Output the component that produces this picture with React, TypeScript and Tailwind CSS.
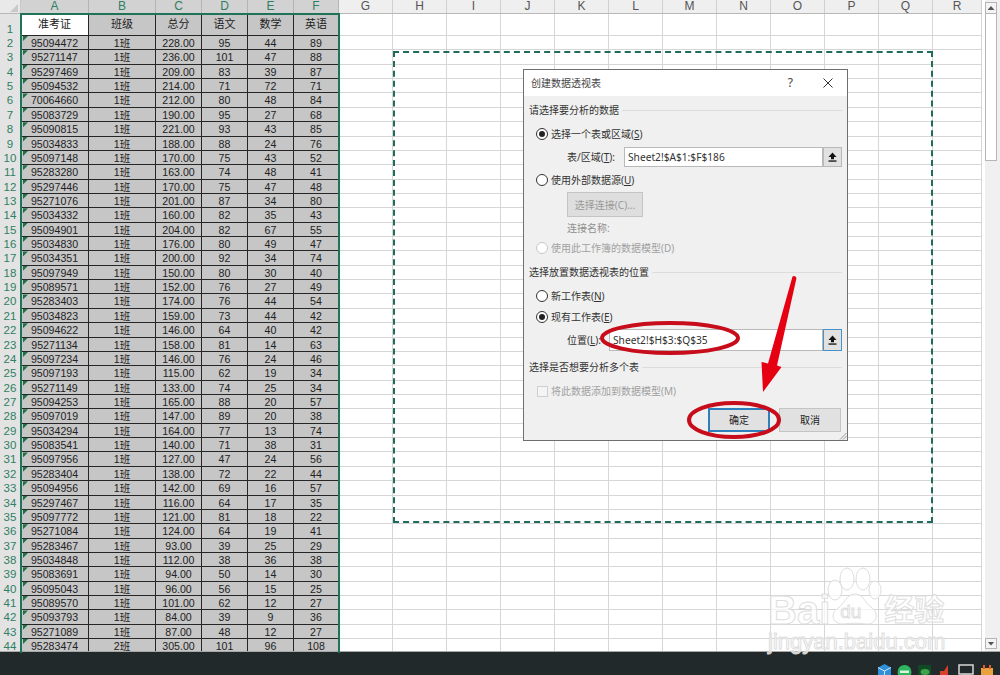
import type { ReactNode } from "react"

const rows: [string, number, number, number, number][] = [
  ["95094472", 228, 95, 44, 89],
  ["95271147", 236, 101, 47, 88],
  ["95297469", 209, 83, 39, 87],
  ["95094532", 214, 71, 72, 71],
  ["70064660", 212, 80, 48, 84],
  ["95083729", 190, 95, 27, 68],
  ["95090815", 221, 93, 43, 85],
  ["95034833", 188, 88, 24, 76],
  ["95097148", 170, 75, 43, 52],
  ["95283280", 163, 74, 48, 41],
  ["95297446", 170, 75, 47, 48],
  ["95271076", 201, 87, 34, 80],
  ["95034332", 160, 82, 35, 43],
  ["95094901", 204, 82, 67, 55],
  ["95034830", 176, 80, 49, 47],
  ["95034351", 200, 92, 34, 74],
  ["95097949", 150, 80, 30, 40],
  ["95089571", 152, 76, 27, 49],
  ["95283403", 174, 76, 44, 54],
  ["95034823", 159, 73, 44, 42],
  ["95094622", 146, 64, 40, 42],
  ["95271134", 158, 81, 14, 63],
  ["95097234", 146, 76, 24, 46],
  ["95097193", 115, 62, 19, 34],
  ["95271149", 133, 74, 25, 34],
  ["95094253", 165, 88, 20, 57],
  ["95097019", 147, 89, 20, 38],
  ["95034294", 164, 77, 13, 74],
  ["95083541", 140, 71, 38, 31],
  ["95097956", 127, 47, 24, 56],
  ["95283404", 138, 72, 22, 44],
  ["95094956", 142, 69, 16, 57],
  ["95297467", 116, 64, 17, 35],
  ["95097772", 121, 81, 18, 22],
  ["95271084", 124, 64, 19, 41],
  ["95283467", 93, 39, 25, 29],
  ["95034848", 112, 38, 36, 38],
  ["95083691", 94, 50, 14, 30],
  ["95095043", 96, 56, 15, 25],
  ["95089570", 101, 62, 12, 27],
  ["95093793", 84, 39, 9, 36],
  ["95271089", 87, 48, 12, 27],
  ["95283474", 305, 101, 96, 108],
]

// widths of the columns A..F, then G..R
const dataCols = ["w-[68px]", "w-[67px]", "w-[46px]", "w-[46px]", "w-[46px]", "w-[45px]"]
const emptyCols = [
  "w-[54px]", "w-[54px]", "w-[54px]", "w-[54px]", "w-[54px]", "w-[54px]",
  "w-[54px]", "w-[54px]", "w-[54px]", "w-[54px]", "w-[54px]", "w-[49px]",
]
const dataLetters = ["A", "B", "C", "D", "E", "F"]
const emptyLetters = ["G", "H", "I", "J", "K", "L", "M", "N", "O", "P", "Q", "R"]
const titles = ["准考证", "班级", "总分", "语文", "数学", "英语"]

function EmptyCells() {
  return (
    <>
      {emptyCols.map((w, i) => (
        <div key={i} className={`${w} flex-none border-r border-b border-[#d6d6d6] bg-white`} />
      ))}
    </>
  )
}

function RowNum({ n, tall }: { n: number; tall?: boolean }) {
  return (
    <div
      className={`w-[21px] flex-none border-r border-[#b8b8b8] bg-[#e3e3e3] text-center text-[11.5px] text-[#2f7f62] ${
        tall ? "pt-[8px] leading-[14px]" : "leading-[14px]"
      }`}
    >
      {n}
    </div>
  )
}

function DataCell({ w, children, mark }: { w: string; children: ReactNode; mark?: boolean }) {
  return (
    <div
      className={`${w} relative flex-none border-r border-b border-[#262626] bg-[#c6c6c6] text-center text-[10.6px] leading-[14px] text-[#222]`}
    >
      {mark && (
        <span className="absolute top-0 left-[2px] h-[5px] w-[5px] bg-[#1e7145] [clip-path:polygon(0_0,100%_0,0_100%)]" />
      )}
      {children}
    </div>
  )
}

function Sheet() {
  return (
    <div className="flex-none font-['Liberation_Sans','Noto_Sans_CJK_SC',sans-serif]">
      <div className="flex h-[14px] border-b border-[#b8b8b8] text-center text-[12px] leading-[13px]">
        <div className="relative w-[21px] flex-none border-r border-[#c8c8c8] bg-[#e9e9e9]">
          <span className="absolute right-[2px] bottom-[1px] h-[8px] w-[8px] bg-[#c9c9c9] [clip-path:polygon(100%_0,100%_100%,0_100%)]" />
        </div>
        {dataCols.map((w, i) => (
          <div key={i} className={`${w} flex-none border-r border-[#b4b4b4] bg-[#d2d2d2] text-[#2f7f62]`}>
            {dataLetters[i]}
          </div>
        ))}
        {emptyCols.map((w, i) => (
          <div key={i} className={`${w} flex-none border-r border-[#d0d0d0] bg-[#efefef] text-[#555]`}>
            {emptyLetters[i]}
          </div>
        ))}
      </div>
      <div className="flex h-[22px]">
        <RowNum n={1} tall />
        {dataCols.map((w, i) => (
          <div
            key={i}
            className={`${w} flex-none border-r border-b border-[#262626] text-center text-[11px] leading-[21px] text-[#222] ${
              i === 0 ? "bg-white" : "bg-[#c6c6c6]"
            }`}
          >
            {titles[i]}
          </div>
        ))}
        <EmptyCells />
      </div>
      {rows.map((r, i) => (
        <div key={r[0]} className="flex h-[14.36px]">
          <RowNum n={i + 2} />
          <DataCell w={dataCols[0]} mark>
            {r[0]}
          </DataCell>
          <DataCell w={dataCols[1]}>{i === 42 ? "2班" : "1班"}</DataCell>
          <DataCell w={dataCols[2]}>{r[1].toFixed(2)}</DataCell>
          <DataCell w={dataCols[3]}>{r[2]}</DataCell>
          <DataCell w={dataCols[4]}>{r[3]}</DataCell>
          <DataCell w={dataCols[5]}>{r[4]}</DataCell>
          <EmptyCells />
        </div>
      ))}
    </div>
  )
}

function Scrollbar() {
  return (
    <div className="ml-[3px] flex h-full w-[15px] flex-none flex-col bg-[#f0f0f0] pt-[2px] pr-[3px]">
      <div className="flex h-[12px] flex-none items-center justify-center border border-[#b5b5b5] bg-[#f4f4f4]">
        <span className="h-[4px] w-[7px] bg-[#555] [clip-path:polygon(50%_0,100%_100%,0_100%)]" />
      </div>
      <div className="h-[147px] flex-none border-x border-b border-[#b5b5b5] bg-white" />
      <div className="flex-1" />
      <div className="mb-[2px] flex h-[11px] flex-none items-center justify-center border border-[#b5b5b5] bg-[#f4f4f4]">
        <span className="h-[4px] w-[7px] bg-[#555] [clip-path:polygon(0_0,100%_0,50%_100%)]" />
      </div>
    </div>
  )
}

function Radio({ on, off }: { on?: boolean; off?: boolean }) {
  return (
    <span
      className={`flex h-[12px] w-[12px] flex-none items-center justify-center rounded-full border bg-white ${
        off ? "border-[#c8c8c8]" : "border-[#333]"
      }`}
    >
      {on && <span className="h-[6px] w-[6px] rounded-full bg-[#222]" />}
    </span>
  )
}

function Heading({ text, className }: { text: string; className: string }) {
  return (
    <div className={`flex h-[18px] flex-none items-center gap-[3px] pr-[5px] pl-[5px] ${className}`}>
      <span className="flex-none text-[#333]">{text}</span>
      <span className="h-px flex-1 bg-[#dcdcdc]" />
    </div>
  )
}

function Option({ children, on, off, className }: { children: ReactNode; on?: boolean; off?: boolean; className: string }) {
  return (
    <div className={`flex h-[20px] flex-none items-center gap-[3px] pl-[12px] ${off ? "text-[#a0a0a0]" : "text-[#333]"} ${className}`}>
      <Radio on={on} off={off} />
      <span>{children}</span>
    </div>
  )
}

function PickerIcon() {
  return (
    <svg width="9" height="10" viewBox="0 0 9 10">
      <path d="M4.5 0.5 L8.5 5 H6 V7.2 H3 V5 H0.5 Z" fill="#111" />
      <rect x="0.5" y="8.4" width="8" height="1.3" fill="#111" />
    </svg>
  )
}

function Dialog() {
  return (
    <div className="absolute top-[69px] left-[523px] flex h-[372px] w-[325px] flex-col border border-[#6f6f6f] bg-[#f0f0f0] font-['Noto_Sans','Noto_Sans_CJK_SC',sans-serif] text-[10px] leading-[14px]">
      <div className="flex h-[26px] flex-none items-center bg-white pl-[7px] text-[#444]">
        <span className="flex-1">创建数据透视表</span>
        <span className="mr-[30px] text-[12px]">?</span>
        <svg width="10" height="10" viewBox="0 0 10 10" className="mr-[14px]">
          <path d="M0.5 0.5 L9.5 9.5 M9.5 0.5 L0.5 9.5" stroke="#333" strokeWidth="1" />
        </svg>
      </div>

      <Heading text="请选择要分析的数据" className="mt-[5px]" />
      <Option on className="mt-[5px]">
        选择一个表或区域(<u>S</u>)
      </Option>
      <div className="mt-[3px] flex h-[20px] flex-none items-center pl-[43px]">
        <span className="w-[57px] flex-none text-[#333]">
          表/区域(<u>T</u>):
        </span>
        <span className="flex h-full w-[199px] flex-none items-center border border-[#b9b9b9] bg-white pl-[3px] text-[10.2px] text-[#333]">
          Sheet2!$A$1:$F$186
        </span>
        <span className="flex h-full w-[19px] flex-none items-center justify-center border border-[#b9b9b9] bg-[#e1e1e1]">
          <PickerIcon />
        </span>
      </div>
      <Option className="mt-[3px]">
        使用外部数据源(<u>U</u>)
      </Option>
      <div className="mt-[2px] ml-[43px] flex h-[25px] w-[76px] flex-none items-center justify-center border border-[#c4c4c4] bg-[#dedede] text-[#9a9a9a]">
        选择连接(C)...
      </div>
      <div className="mt-[1px] flex h-[20px] flex-none items-center pl-[43px] text-[#8f8f8f]">连接名称:</div>
      <Option off className="">
        使用此工作簿的数据模型(D)
      </Option>

      <Heading text="选择放置数据透视表的位置" className="mt-[5px]" />
      <Option className="mt-[5px]">
        新工作表(<u>N</u>)
      </Option>
      <Option on className="mt-[1px]">
        现有工作表(<u>E</u>)
      </Option>
      <div className="mt-[2px] flex h-[22px] flex-none items-center pl-[43px]">
        <span className="w-[42px] flex-none text-[#333]">
          位置(<u>L</u>):
        </span>
        <span className="flex h-full w-[214px] flex-none items-center border border-[#b9b9b9] bg-white pl-[3px] text-[10.2px] text-[#333]">
          Sheet2!$H$3:$Q$35
        </span>
        <span className="flex h-full w-[19px] flex-none items-center justify-center border border-[#4a90c4] bg-[#e1e1e1]">
          <PickerIcon />
        </span>
      </div>

      <Heading text="选择是否想要分析多个表" className="mt-[7px]" />
      <div className="mt-[5px] flex h-[20px] flex-none items-center gap-[3px] pl-[13px] text-[#a0a0a0]">
        <span className="h-[11px] w-[11px] flex-none border border-[#cfcfcf] bg-[#f4f4f4]" />
        <span>将此数据添加到数据模型(M)</span>
      </div>

      <div className="mt-[7px] flex h-[24px] flex-none justify-end gap-[9px] pr-[6px] text-[#222]">
        <span className="flex w-[62px] items-center justify-center border-2 border-[#2f7fbd] bg-[#e1e1e1]">确定</span>
        <span className="flex w-[62px] items-center justify-center border border-[#c4c4c4] bg-[#e1e1e1]">取消</span>
      </div>

      <svg width="8" height="8" viewBox="0 0 8 8" className="absolute right-0 bottom-0">
        <path d="M7.5 1 L1 7.5 M7.5 4 L4 7.5" stroke="#9a9a9a" strokeWidth="1" />
      </svg>
    </div>
  )
}

function Annotations() {
  return (
    <svg width="1000" height="675" viewBox="0 0 1000 675" className="pointer-events-none absolute top-0 left-0">
      <ellipse cx="670" cy="338" rx="68" ry="15" fill="none" stroke="#c70d1c" strokeWidth="4" />
      <ellipse cx="734" cy="420" rx="45" ry="17" fill="none" stroke="#c70d1c" strokeWidth="4" />
      <path
        d="M792.5 276.5 Q795 275 796.5 278 L777 365.5 L781.5 367 L763 392 L761.5 362 L768 363.5 Z"
        fill="#e50012"
      />
    </svg>
  )
}

function Watermark() {
  const stroke = "text-white/70 [-webkit-text-stroke:1px_#dedede] font-['Liberation_Sans','Noto_Sans_CJK_SC',sans-serif] whitespace-nowrap"
  return (
    <div className="pointer-events-none absolute top-[566px] left-[768px] flex flex-col items-start">
      <div className="flex h-[62px] items-end">
        <span className={`${stroke} -mr-[4px] text-[40px] leading-[36px] font-bold`}>Bai</span>
        <span className="relative h-[62px] w-[56px] flex-none">
          <svg width="56" height="62" viewBox="0 0 56 62" className="absolute top-0 left-0">
            <g fill="#ffffff" fillOpacity="0.7" stroke="#dedede" strokeWidth="1">
              <ellipse cx="9" cy="24" rx="7" ry="10" />
              <ellipse cx="21" cy="13" rx="7" ry="11" />
              <ellipse cx="37" cy="13" rx="7" ry="11" />
              <ellipse cx="49" cy="24" rx="6" ry="9" />
              <path d="M29 28 C38 28 39 38 46 42 C54 48 50 59 40 58 C33 57 25 57 18 58 C7 59 3 48 12 42 C19 38 20 28 29 28 Z" />
            </g>
          </svg>
          <span className={`${stroke} absolute top-[36px] left-[14px] text-[19px] leading-[20px]`}>du</span>
        </span>
        <span className={`${stroke} ml-[2px] text-[30px] leading-[36px] font-bold`}>经验</span>
      </div>
      <span className={`${stroke} mt-[3px] text-[22px] leading-[22px]`}>jingyan.baidu.com</span>
    </div>
  )
}

function TrayIcons() {
  return (
    <div className="flex h-[23px] flex-none items-start justify-end gap-[5px] overflow-hidden bg-[#22292a] pt-[12px] pr-[6px]">
      <svg width="15" height="16" viewBox="0 0 15 16">
        <path d="M7.5 0 L14 3.5 V12 L7.5 16 L1 12 V3.5 Z" fill="#2f8fd8" />
        <path d="M1 3.5 L7.5 7 L14 3.5 M7.5 7 V16" stroke="#cfe8fa" strokeWidth="1" fill="none" />
      </svg>
      <svg width="15" height="16" viewBox="0 0 15 16">
        <circle cx="7.5" cy="8" r="7" fill="#2fb55f" />
        <rect x="3" y="6.5" width="9" height="2.5" fill="#d8f5e2" />
      </svg>
      <svg width="15" height="16" viewBox="0 0 15 16">
        <rect x="1" y="1" width="13" height="15" fill="#0f4a25" />
        <ellipse cx="8" cy="8" rx="4.5" ry="3" fill="#3fa34d" />
      </svg>
      <svg width="15" height="16" viewBox="0 0 15 16">
        <path d="M3 7 H7 L11 1 V16 L7 11 H3 Z" fill="#d9402a" />
      </svg>
      <svg width="18" height="16" viewBox="0 0 18 16">
        <rect x="2" y="1" width="14" height="9" fill="none" stroke="#d8d8d8" strokeWidth="1.5" />
        <rect x="5" y="10" width="8" height="6" fill="#bdbdbd" />
      </svg>
      <svg width="14" height="16" viewBox="0 0 14 16">
        <rect x="1" y="4" width="12" height="12" fill="#e8a13c" />
        <rect x="3" y="1" width="2" height="4" fill="#e05a2b" />
        <rect x="9" y="1" width="2" height="4" fill="#e05a2b" />
      </svg>
    </div>
  )
}

export default function App() {
  return (
    <div className="relative flex h-[675px] w-[1000px] flex-col overflow-hidden bg-white">
      <div className="flex h-[652px] flex-none overflow-hidden border-b border-[#a8a8a8]">
        <Sheet />
        <Scrollbar />
      </div>
      <TrayIcons />

      <div className="absolute top-[13px] left-[20px] h-[640px] w-[320px] border-2 border-b-0 border-[#1f7358]" />
      <div className="absolute top-[51px] left-[393px] h-[472px] w-[540px] border-2 border-dashed border-[#1f6b5c]" />
      <Watermark />
      <Dialog />
      <Annotations />
    </div>
  )
}
